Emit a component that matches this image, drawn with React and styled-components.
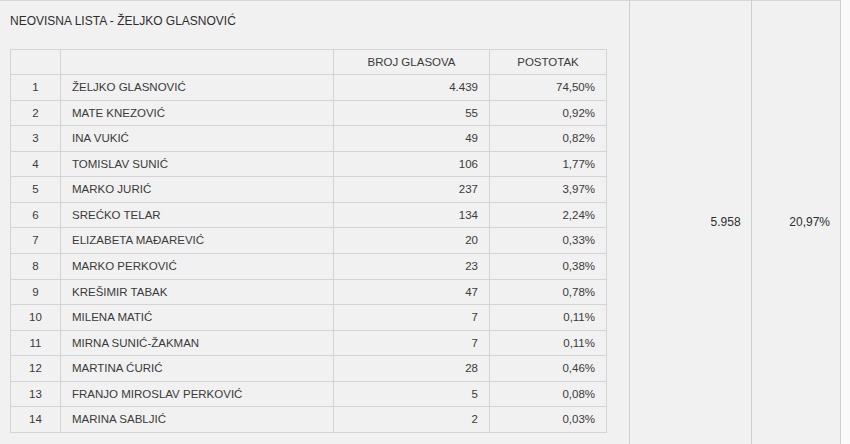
import React from 'react';
import styled, { createGlobalStyle } from 'styled-components';

const GlobalStyle = createGlobalStyle`
  html, body {
    margin: 0;
    padding: 0;
    background: #fafafa;
  }
  body {
    font-family: "Liberation Sans", Arial, sans-serif;
    color: #333;
  }
`;

const candidates = [
  { name: 'ŽELJKO GLASNOVIĆ', votes: '4.439', pct: '74,50%' },
  { name: 'MATE KNEZOVIĆ', votes: '55', pct: '0,92%' },
  { name: 'INA VUKIĆ', votes: '49', pct: '0,82%' },
  { name: 'TOMISLAV SUNIĆ', votes: '106', pct: '1,77%' },
  { name: 'MARKO JURIĆ', votes: '237', pct: '3,97%' },
  { name: 'SREĆKO TELAR', votes: '134', pct: '2,24%' },
  { name: 'ELIZABETA MAĐAREVIĆ', votes: '20', pct: '0,33%' },
  { name: 'MARKO PERKOVIĆ', votes: '23', pct: '0,38%' },
  { name: 'KREŠIMIR TABAK', votes: '47', pct: '0,78%' },
  { name: 'MILENA MATIĆ', votes: '7', pct: '0,11%' },
  { name: 'MIRNA SUNIĆ-ŽAKMAN', votes: '7', pct: '0,11%' },
  { name: 'MARTINA ĆURIĆ', votes: '28', pct: '0,46%' },
  { name: 'FRANJO MIROSLAV PERKOVIĆ', votes: '5', pct: '0,08%' },
  { name: 'MARINA SABLJIĆ', votes: '2', pct: '0,03%' },
];

const ListTable = () => (
  <OuterTable>
    <tbody>
      <tr>
        <ListCell>
          <ListTitle>NEOVISNA LISTA - ŽELJKO GLASNOVIĆ</ListTitle>
          <CandidateTable>
            <colgroup>
              <col style={{ width: 50 }} />
              <col style={{ width: 273 }} />
              <col style={{ width: 156 }} />
              <col style={{ width: 117 }} />
            </colgroup>
            <thead>
              <tr>
                <HeadCell />
                <HeadCell />
                <HeadCell>BROJ GLASOVA</HeadCell>
                <HeadCell>POSTOTAK</HeadCell>
              </tr>
            </thead>
            <tbody>
              {candidates.map((c, i) => (
                <tr key={i}>
                  <Cell align="center">{i + 1}</Cell>
                  <Cell align="left">{c.name}</Cell>
                  <Cell align="right">{c.votes}</Cell>
                  <Cell align="right">{c.pct}</Cell>
                </tr>
              ))}
            </tbody>
          </CandidateTable>
        </ListCell>
        <TotalCell width={122}>5.958</TotalCell>
        <TotalCell width={89}>20,97%</TotalCell>
      </tr>
    </tbody>
  </OuterTable>
);

export default function App() {
  return (
    <>
      <GlobalStyle />
      <ListTable />
    </>
  );
}

const OuterTable = styled.table`
  border-collapse: collapse;
  background: #f1f1f1;
  width: 841px;
  height: 443px;
  border-top: 1px solid #d6d6d6;
  border-bottom: 1px solid #d6d6d6;
  border-right: 1px solid #cfcfcf;
`;

const ListCell = styled.td`
  width: 609px;
  padding: 10px 10px 11px 10px;
  vertical-align: top;
  border-right: 1px solid #cfcfcf;
`;

const ListTitle = styled.div`
  font-size: 12px;
  line-height: 20px;
  color: #2e2e2e;
  margin-bottom: 18px;
`;

const CandidateTable = styled.table`
  border-collapse: collapse;
  width: 597px;
  table-layout: fixed;
  font-size: 11.5px;
  color: #3a3a3a;
`;

const HeadCell = styled.th`
  font-weight: normal;
  text-align: center;
  line-height: 24px;
  padding: 0;
  border: 1px solid #d4d4d4;
`;

const Cell = styled.td`
  text-align: ${p => p.align};
  line-height: 24.57px;
  padding: ${p => (p.align === 'right' ? '0 11px 0 0' : p.align === 'left' ? '0 0 0 11px' : '0')};
  border: 1px solid #d4d4d4;
  white-space: nowrap;
`;

const TotalCell = styled.td`
  width: ${p => p.width - 10}px;
  text-align: right;
  vertical-align: middle;
  padding: 0 10px 0 0;
  font-size: 12px;
  color: #2e2e2e;
  border-right: 1px solid #cfcfcf;
`;
